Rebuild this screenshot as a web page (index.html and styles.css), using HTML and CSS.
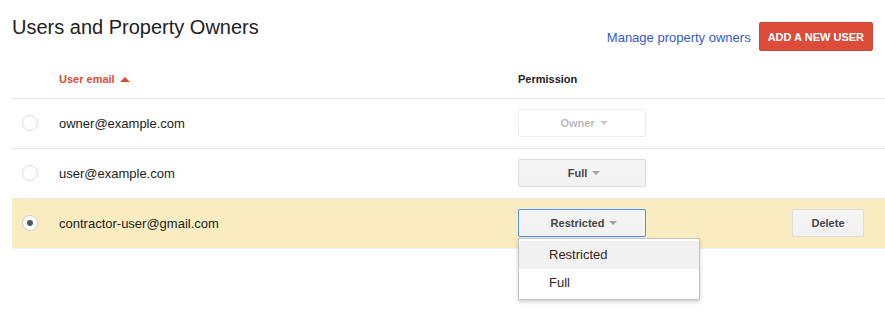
FILE: index.html
```html
<!DOCTYPE html>
<html lang="en">
<head>
    <meta charset="UTF-8">
    <title>Users and Property Owners</title>
    <link rel="stylesheet" href="styles.css">
</head>
<body>
<div class="page">
    <div class="topbar">
        <h1>Users and Property Owners</h1>
        <div class="actions">
            <a href="#" class="link">Manage property owners</a>
            <button class="btn-red">ADD A NEW USER</button>
        </div>
    </div>

    <div class="users">
        <div class="row head">
            <div class="cell check"></div>
            <div class="cell email sort">User email <span class="sort-arrow"></span></div>
            <div class="cell perm">Permission</div>
        </div>

        <div class="row">
            <div class="cell check"><span class="radio"></span></div>
            <div class="cell email">owner@example.com</div>
            <div class="cell perm">
                <div class="select disabled">Owner <span class="caret"></span></div>
            </div>
        </div>

        <div class="row">
            <div class="cell check"><span class="radio"></span></div>
            <div class="cell email">user@example.com</div>
            <div class="cell perm">
                <div class="select">Full <span class="caret"></span></div>
            </div>
        </div>

        <div class="row selected">
            <div class="cell check"><span class="radio on"></span></div>
            <div class="cell email">contractor-user@gmail.com</div>
            <div class="cell perm">
                <div class="select-wrap">
                    <div class="select open">Restricted <span class="caret"></span></div>
                    <!-- open menu -->
                    <ul class="menu">
                        <li class="hover">Restricted</li>
                        <li>Full</li>
                    </ul>
                </div>
            </div>
            <div class="cell tools">
                <button class="btn">Delete</button>
            </div>
        </div>
    </div>
</div>
</body>
</html>
```

FILE: styles.css
```css
body {
    margin: 0;
    min-height: 317px;
    font-family: Arial, "Liberation Sans", sans-serif;
    color: #222;
    background: #fff;
}
.page {
    padding-left: 12px;
    padding-bottom: 70px;
}
.topbar {
    display: flex;
    justify-content: space-between;
    align-items: flex-start;
    padding-right: 12px;
    height: 60px;
}
h1 {
    margin: 0;
    padding-top: 15px;
    font-size: 20px;
    font-weight: normal;
    line-height: 24px;
    color: #222;
}
.actions {
    display: flex;
    align-items: center;
    gap: 8px;
    padding-top: 22px;
}
.link {
    color: #2f5bd6;
    font-size: 13px;
    text-decoration: none;
    padding-top: 1px;
}
.btn-red {
    height: 29px;
    padding: 0 8px;
    border: 1px solid #d14836;
    border-radius: 2px;
    background: #dd4b39;
    color: #fff;
    font-family: inherit;
    font-size: 11px;
    font-weight: bold;
}
/* table */
.users {
    position: relative;
}
.row {
    display: flex;
    align-items: center;
    height: 49px;
    border-bottom: 1px solid #e5e5e5;
}
.row.head {
    height: 38px;
    font-size: 11px;
    font-weight: bold;
}
.row.selected {
    background: #f9ecc0;
    border-bottom-color: #f2f2f2;
}
.cell.check {
    width: 47px;
    padding-left: 10px;
    box-sizing: border-box;
    display: flex;
}
.cell.email {
    width: 458px;
    font-size: 13px;
    color: #222;
}
.row.head .cell.email {
    font-size: 11px;
}
.sort {
    color: #dd4b39 !important;
    display: flex;
    align-items: center;
    gap: 5px;
}
.sort-arrow {
    width: 0;
    height: 0;
    border-left: 5px solid transparent;
    border-right: 5px solid transparent;
    border-bottom: 5px solid #dd4b39;
}
.cell.perm {
    width: 128px;
    padding-left: 1px;
    margin-top: -1px;
}
.row.head .cell.perm {
    margin-top: 0;
}
.cell.tools {
    margin-left: auto;
    padding-right: 21px;
    margin-top: -1px;
}
.radio {
    display: block;
    width: 14px;
    height: 14px;
    border: 1px solid #dcdcdc;
    border-radius: 50%;
    background: #fff;
    position: relative;
    top: -1px;
}
.radio.on {
    border-color: #d0d0d0;
}
.radio.on::after {
    content: "";
    position: absolute;
    left: 4px;
    top: 4px;
    width: 6px;
    height: 6px;
    border-radius: 50%;
    background: #555;
}
.select {
    width: 128px;
    height: 28px;
    box-sizing: border-box;
    border: 1px solid #dcdcdc;
    border-radius: 2px;
    background: linear-gradient(#f5f5f5, #f1f1f1);
    display: flex;
    align-items: center;
    justify-content: center;
    gap: 5px;
    font-size: 11px;
    font-weight: bold;
    color: #444;
    padding-left: 4px;
}
.select.disabled {
    background: #fff;
    border-color: #ececec;
    color: #bbb;
}
.select.open {
    border-color: #4d90fe;
}
.caret {
    width: 0;
    height: 0;
    border-left: 4px solid transparent;
    border-right: 4px solid transparent;
    border-top: 4px solid #a0a0a0;
}
.select.disabled .caret {
    border-top-color: #ccc;
}
.select-wrap {
    position: relative;
    z-index: 10;
}
.menu {
    position: absolute;
    top: 29px;
    left: 0;
    width: 182px;
    box-sizing: border-box;
    margin: 0;
    padding: 2px 0;
    list-style: none;
    background: #fff;
    border: 1px solid #c6c6c6;
    box-shadow: 0 2px 4px rgba(0, 0, 0, 0.2);
}
.menu li {
    height: 28px;
    line-height: 28px;
    padding-left: 30px;
    font-size: 13px;
    color: #3a2622;
}
.menu li.hover {
    background: #f1f1f1;
}
.btn {
    width: 72px;
    height: 28px;
    border: 1px solid #dcdcdc;
    border-radius: 2px;
    background: linear-gradient(#f5f5f5, #f1f1f1);
    font-family: inherit;
    font-size: 11px;
    font-weight: bold;
    color: #444;
}
```
